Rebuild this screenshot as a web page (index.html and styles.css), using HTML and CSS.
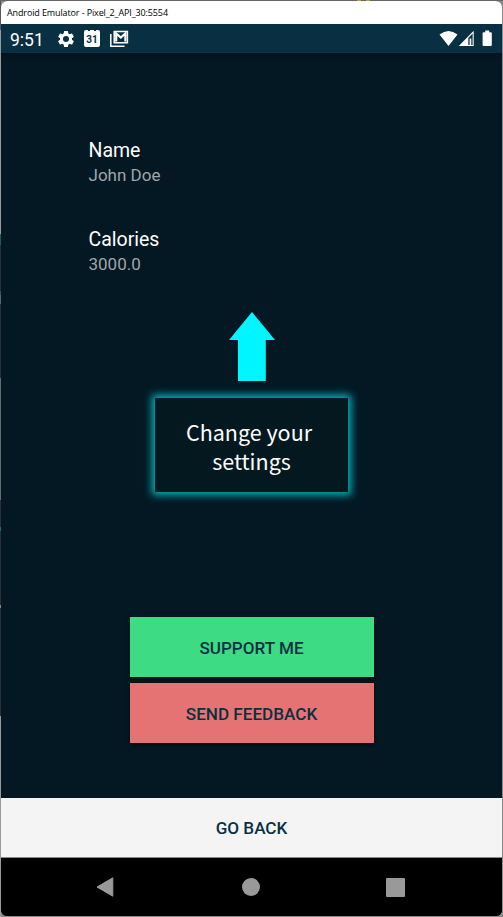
FILE: index.html
```html
<!DOCTYPE html>
<html lang="en">
<head>
<meta charset="utf-8">
<title>Android Emulator</title>
<link rel="stylesheet" href="styles.css">
</head>
<body>
<div class="window">
  <header class="titlebar"><span class="title">Android Emulator - Pixel_2_API_30:5554</span></header>
  <div class="status">
    <span class="clock">9:51</span>
    <svg class="gear" width="20" height="20" viewBox="0 0 24 24"><path fill="#fff" d="M19.14 12.94c.04-.3.06-.61.06-.94s-.02-.64-.07-.94l2.03-1.58a.49.49 0 0 0 .12-.61l-1.92-3.32a.49.49 0 0 0-.59-.22l-2.39.96c-.5-.38-1.03-.7-1.62-.94l-.36-2.54a.48.48 0 0 0-.48-.41h-3.84c-.24 0-.43.17-.47.41l-.36 2.54c-.59.24-1.13.57-1.62.94l-2.39-.96a.48.48 0 0 0-.59.22L2.74 8.87c-.12.21-.08.47.12.61l2.03 1.58c-.05.3-.09.63-.09.94s.02.64.07.94l-2.03 1.58a.49.49 0 0 0-.12.61l1.92 3.32c.12.22.37.29.59.22l2.39-.96c.5.38 1.03.7 1.62.94l.36 2.54c.05.24.24.41.48.41h3.84c.24 0 .44-.17.47-.41l.36-2.54c.59-.24 1.13-.56 1.62-.94l2.39.96c.22.08.47 0 .59-.22l1.92-3.32a.49.49 0 0 0-.12-.61zM12 15.6A3.6 3.6 0 1 1 12 8.4a3.6 3.6 0 0 1 0 7.2z"/></svg>
    <span class="calendar"><span class="day">31</span></span>
    <svg class="mail" width="20" height="18" viewBox="0 0 20 18"><path fill="none" stroke="#fff" stroke-width="1.500" d="M1.800 4v12.300H15.500M5.200 1.500h13.200v11.300H5.200z"/><path fill="none" stroke="#fff" stroke-width="2.200" d="M7.200 11.500V3.400l4.600 4.200 4.600-4.200v8.100"/></svg>
    <svg class="signals" width="55" height="18" viewBox="0 0 55 18"><path fill="#fff" d="M.5 4.6Q9.5-2.400 18.500 4.600L9.500 16zM34.700.8V16H19.800z"/><path fill="#083042" d="M29.300 8l4.300-4.400v11.300h-4.300z"/><path fill="#fff" d="M30.600 8.500h1.700V15h-1.700zM46.200.6h4v1.600h1.600q1 0 1 1V15q0 1-1 1h-7.200q-1 0-1-1V3.200q0-1 1-1h1.600z"/></svg>
  </div>
  <main class="content">
    <section class="fields">
      <div class="field"><div class="label">Name</div><div class="value">John Doe</div></div>
      <div class="field"><div class="label">Calories</div><div class="value">3000.0</div></div>
    </section>
    <svg class="arrow" width="46" height="69" viewBox="0 0 46 69"><path fill="#00f6ff" d="M23 0l23 28H36.800v41H9V28H0z"/></svg>
    <div class="callout"><div class="line first">Change your</div><div class="line">settings</div></div>
    <div class="actions">
      <button class="button support">SUPPORT ME</button>
      <button class="button feedback">SEND FEEDBACK</button>
    </div>
  </main>
  <button class="button back">GO BACK</button>
  <nav class="navbar">
    <svg width="18" height="20" viewBox="0 0 18 20"><path fill="#999" stroke="#999" stroke-linejoin="round" d="M1 10L16.800.8v18.400z"/></svg>
    <svg class="home" width="18" height="18" viewBox="0 0 18 18"><circle cx="9" cy="9" r="9" fill="#999"/></svg>
    <svg width="19" height="19" viewBox="0 0 19 19"><rect width="19" height="19" rx="1" fill="#999"/></svg>
  </nav>
</div>
</body>
</html>
```
FILE: styles.css
```css
* { box-sizing: border-box; }
body {
  margin: 0;
  width: 503px;
  height: 917px;
  padding: 1px;
  overflow: hidden;
  font-family: Roboto, sans-serif;
  background:
    linear-gradient(90deg, transparent 357px, #b9a33c 357px 361px, transparent 361px 366px, #b9a33c 366px 370px, transparent 370px) 0 0 / 100% 1px no-repeat,
    linear-gradient(#686568, #686568) 0 0 / 100% 1px no-repeat,
    linear-gradient(#55585c 0 30px, #999 30px 234px, #1d5c64 234px 245px, #273137 245px 291px, #1d6068 291px 295px, #56666b 295px 304px, #273137 304px 378px, #58736f 378px 500px, #273137 500px 527px, #167078 527px 531px, #273137 531px 605px, #888 605px 608px, #273137 608px 716px, #999 716px) 0 0 / 1px 100% no-repeat,
    #8a8a8a;
}
.window {
  width: 501px;
  height: 915px;
  display: flex;
  flex-direction: column;
  overflow: hidden;
  border-radius: 6px;
  background: #031822;
}
.titlebar {
  height: 23px;
  background: #fff;
  padding-left: 6px;
  display: flex;
  align-items: center;
}
.title {
  font: 9px/12px "Open Sans", sans-serif;
  color: #000;
  letter-spacing: -0.12px;
  white-space: nowrap;
}
.status {
  height: 29px;
  background: #083042;
  display: flex;
  align-items: center;
  padding: 0 8px 0 9px;
  color: #fff;
}
.clock { font-size: 17.5px; line-height: 20px; width: 46px; padding-top: 2px; }
.calendar {
  width: 16px;
  height: 17px;
  margin-left: 8px;
  background:
    linear-gradient(#083042, #083042) 4px 0 / 2px 1px no-repeat,
    linear-gradient(#083042, #083042) 10px 0 / 2px 1px no-repeat,
    #fff;
  border-radius: 2px;
  text-align: center;
}
.day { display: block; padding-top: 4px; font-size: 10px; line-height: 12px; font-weight: 700; color: #083042; }
.mail { margin-left: 9px; }
.signals { margin-left: auto; }
.content {
  height: 745px;
  display: flex;
  flex-direction: column;
  align-items: center;
  background: linear-gradient(#03131b, #031822 8px);
}
.fields {
  width: 100%;
  height: 258px;
  padding: 85px 0 0 87.5px;
  display: flex;
  flex-direction: column;
  gap: 40px;
}
.label { color: #fff; font-size: 19.5px; line-height: 26px; }
.value { color: #a0a7ab; font-size: 17px; line-height: 23px; }
.arrow { flex: none; margin-top: 1px; }
.callout {
  width: 193px;
  height: 94px;
  margin-top: 17px;
  padding-top: 19px;
  background: #03181f;
  box-shadow: 0 0 8px 3px #00b8c2;
  color: #fff;
  text-align: center;
  font: 21.5px/29px "Noto Sans CJK SC", sans-serif;
}
.first { padding-right: 5px; }
.actions { margin-top: 125px; display: flex; flex-direction: column; gap: 6px; }
.button {
  border: 0;
  border-radius: 0;
  padding: 1px 0 0;
  height: 60px;
  font: 500 17.1px/20px Roboto, sans-serif;
  color: #083042;
}
.actions .button { width: 244px; box-shadow: 0 2px 4px #020c11; }
.support { background: #3ddc84; }
.feedback { background: #e57373; }
.back { width: 100%; background: #f4f4f4; border-bottom: 1px solid #888; }
.navbar {
  flex: 1;
  padding: 0 97px 0 95px;
  background: #000;
  display: flex;
  justify-content: space-between;
  align-items: center;
}
.home { margin-left: 2px; }
```
